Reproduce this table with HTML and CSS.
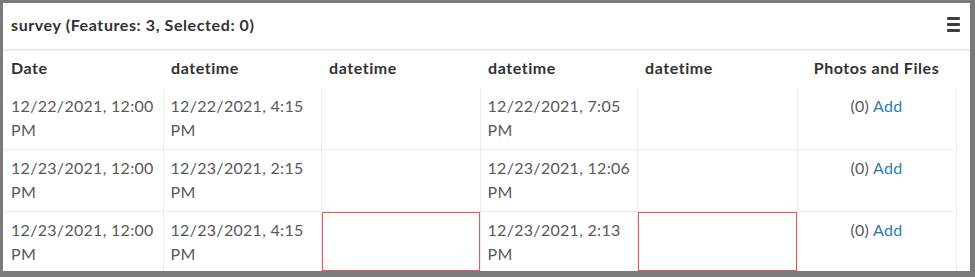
FILE: index.html
```html
<!DOCTYPE html>
<html>
<head>
<meta charset="utf-8">
<link rel="stylesheet" href="styles.css">
</head>
<body>
<div class="panel">
  <div class="titlebar">
    <span class="title">survey (Features: 3, Selected: 0)</span>
    <span class="menu"><span></span><span></span><span></span></span>
  </div>
  <div class="tablewrap">
    <table class="grid">
      <colgroup>
        <col class="c1"><col class="c2"><col class="c3"><col class="c4"><col class="c5"><col class="c6">
      </colgroup>
      <thead>
        <tr><th>Date</th><th>datetime</th><th>datetime</th><th>datetime</th><th>datetime</th><th class="center">Photos and Files</th></tr>
      </thead>
      <tbody>
        <tr><td>12/22/2021, 12:00 PM</td><td>12/22/2021, 4:15 PM</td><td></td><td>12/22/2021, 7:05 PM</td><td></td><td class="center"><span class="count">(0)</span> <span class="add">Add</span></td></tr>
        <tr><td>12/23/2021, 12:00 PM</td><td>12/23/2021, 2:15 PM</td><td></td><td>12/23/2021, 12:06 PM</td><td></td><td class="center"><span class="count">(0)</span> <span class="add">Add</span></td></tr>
        <tr class="last"><td>12/23/2021, 12:00 PM</td><td>12/23/2021, 4:15 PM</td><td class="invalid"></td><td>12/23/2021, 2:13 PM</td><td class="invalid"></td><td class="center"><span class="count">(0)</span> <span class="add">Add</span></td></tr>
      </tbody>
    </table>
  </div>
</div>
</body>
</html>
```
FILE: styles.css
```css
html, body {
  margin: 0;
  padding: 0;
  background: #7b7b7b;
}
body {
  width: 975px;
  height: 277px;
  overflow: hidden;
  font-family: Lato, "Open Sans", sans-serif;
}
.panel {
  margin: 3px 5px 0 3px;
  height: 268px;
  background: #fff;
  overflow: hidden;
  display: flex;
  flex-direction: column;
}
.titlebar {
  display: flex;
  align-items: center;
  justify-content: space-between;
  flex: none;
  box-sizing: border-box;
  height: 47px;
  padding: 0 9px 3px 8px;
  border-bottom: 1px solid #e6e6e6;
  box-shadow: 0 1px 1px #f2f2f2;
}
.title {
  font-weight: 700;
  font-size: 16px;
  letter-spacing: 0.6px;
  color: #323232;
}
.menu {
  display: flex;
  flex-direction: column;
  gap: 3px;
  width: 13px;
  margin-right: 1px;
}
.menu span {
  display: block;
  height: 3px;
  background: #3e3e3e;
  border-radius: 1px;
}
.tablewrap {
  flex: 1;
  padding-right: 14px;
  padding-top: 1px;
}
.grid {
  border-collapse: collapse;
  table-layout: fixed;
  width: 953px;
}
.c1 { width: 160px; }
.c2 { width: 158px; }
.c3 { width: 159px; }
.c4 { width: 157px; }
.c5 { width: 160px; }
.c6 { width: 159px; }
th {
  height: 37px;
  box-sizing: border-box;
  text-align: left;
  font-size: 16px;
  font-weight: 700;
  letter-spacing: 0.55px;
  color: #323232;
  padding: 0 4px 4px 8px;
  vertical-align: middle;
}
td {
  height: 49px;
  font-size: 16px;
  letter-spacing: 0.3px;
  line-height: 24px;
  color: #595959;
  padding: 6px 2px 6px 7px;
  vertical-align: top;
  border-left: 1px solid #ededed;
  border-right: 1px solid #ededed;
  border-bottom: 1px solid #ededed;
}
td:first-child { border-left: none; padding-left: 8px; }
.last td { border-bottom: none; height: 48px; padding-bottom: 5px; }
.center { text-align: center; }
th.center { padding-left: 4px; }
td.center { padding-left: 2px; }
.count { color: #595959; }
.add { color: #2b7bc0; }
td.invalid {
  box-shadow: inset 0 0 0 1px #e65a5a;
}
```
